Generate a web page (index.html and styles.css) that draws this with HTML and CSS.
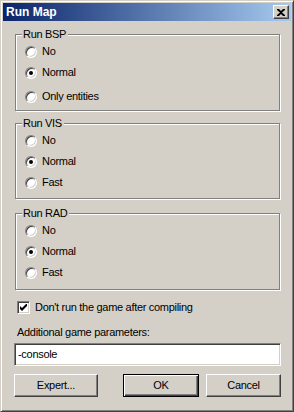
FILE: index.html
```html
<!DOCTYPE html>
<html lang="en">
<head>
    <meta charset="UTF-8">
    <title>Run Map</title>
    <link rel="stylesheet" href="styles.css">
</head>
<body>

    <div class="window">
        <div class="titlebar">
            <span class="title">Run Map</span>
            <span class="close-btn">
                <svg width="8" height="7" viewBox="0 0 8 7">
                    <path d="M0 0h2l2 2 2-2h2v1L5 3.5 8 6v1H6L4 5 2 7H0V6l3-2.5L0 1z" fill="#000"/>
                </svg>
            </span>
        </div>

        <div class="client">
            <div class="group group-bsp">
                <span class="caption">Run BSP</span>
                <div class="option"><span class="radio"></span>No</div>
                <div class="option"><span class="radio checked"></span>Normal</div>
                <div class="option option-spaced"><span class="radio"></span>Only entities</div>
            </div>

            <div class="group group-vis">
                <span class="caption">Run VIS</span>
                <div class="option"><span class="radio"></span>No</div>
                <div class="option"><span class="radio checked"></span>Normal</div>
                <div class="option"><span class="radio"></span>Fast</div>
            </div>

            <div class="group group-rad">
                <span class="caption">Run RAD</span>
                <div class="option"><span class="radio"></span>No</div>
                <div class="option"><span class="radio checked"></span>Normal</div>
                <div class="option"><span class="radio"></span>Fast</div>
            </div>

            <div class="check-row">
                <span class="checkbox">
                    <svg width="7" height="7" viewBox="0 0 7 7">
                        <path d="M0 2v3l2 2 5-5V-1L2 4z" fill="#000"/>
                    </svg>
                </span>
                Don't run the game after compiling
            </div>

            <div class="param-label">Additional game parameters:</div>
            <div class="textbox">-console</div>

            <div class="buttons">
                <span class="btn btn-expert">Expert...</span>
                <span class="btn btn-ok">OK</span>
                <span class="btn btn-cancel">Cancel</span>
            </div>
        </div>
    </div>

</body>
</html>
```

FILE: styles.css
```css
body {
    margin: 0;
    padding: 0;
    background: #d4d0c8;
    font-family: 'Liberation Sans', Arial, sans-serif;
    font-size: 11px;
    line-height: 13px;
    letter-spacing: -0.3px;
    color: #000;
}

.window {
    width: 294px;
    height: 412px;
    box-sizing: border-box;
    padding: 2px;
    background: #d4d0c8;
    border: 1px solid;
    border-color: #d4d0c8 #404040 #404040 #d4d0c8;
    box-shadow: inset 1px 1px 0 #fff, inset -1px -1px 0 #808080;
    display: flex;
    flex-direction: column;
}

/* barra de titulo */
.titlebar {
    height: 18px;
    display: flex;
    align-items: center;
    justify-content: space-between;
    padding: 0 2px 0 2px;
    background: linear-gradient(to right, #0a246a, #a6caf0);
}

.title {
    color: #fff;
    font-weight: bold;
    font-size: 12px;
    letter-spacing: 0;
    padding-left: 1px;
}

.close-btn {
    width: 16px;
    height: 14px;
    box-sizing: border-box;
    display: flex;
    align-items: center;
    justify-content: center;
    background: #d4d0c8;
    border: 1px solid;
    border-color: #fff #404040 #404040 #fff;
    box-shadow: inset -1px -1px 0 #808080;
}

.client {
    padding: 0 0 0 12px;
    display: flex;
    flex-direction: column;
}

/* cuadros de grupo */
.group {
    position: relative;
    width: 265px;
    box-sizing: border-box;
    border: 1px solid #808080;
    box-shadow: 1px 1px 0 #fff, inset 1px 1px 0 #fff;
    padding: 6px 0 0 9px;
}

.group-bsp {
    margin-top: 13px;
    height: 77px;
}

.group-vis {
    margin-top: 12px;
    height: 76px;
}

.group-rad {
    margin-top: 14px;
    height: 77px;
}

.caption {
    position: absolute;
    top: -7px;
    left: 6px;
    padding: 0 2px 0 1px;
    background: #d4d0c8;
}

.option {
    height: 21px;
    display: flex;
    align-items: center;
}

.option-spaced {
    margin-top: 3px;
}

.radio {
    position: relative;
    width: 12px;
    height: 12px;
    box-sizing: border-box;
    margin-right: 5px;
    border-radius: 50%;
    background: #fff;
    border: 1px solid;
    border-color: #808080 #fff #fff #808080;
    box-shadow: inset 1px 1px 0 #404040, inset -1px -1px 0 #d4d0c8;
}

.radio.checked::after {
    content: "";
    position: absolute;
    left: 3px;
    top: 3px;
    width: 4px;
    height: 4px;
    border-radius: 50%;
    background: #000;
}

.check-row {
    margin-top: 11px;
    display: flex;
    align-items: center;
    height: 13px;
    padding-left: 2px;
}

.checkbox {
    width: 13px;
    height: 13px;
    box-sizing: border-box;
    margin-right: 5px;
    display: flex;
    align-items: center;
    justify-content: center;
    background: #fff;
    border: 1px solid;
    border-color: #808080 #fff #fff #808080;
    box-shadow: inset 1px 1px 0 #404040, inset -1px -1px 0 #d4d0c8;
}

.param-label {
    margin-top: 12px;
    padding-left: 2px;
}

.textbox {
    margin-top: 4px;
    margin-left: -1px;
    width: 267px;
    height: 23px;
    box-sizing: border-box;
    padding: 0 3px;
    display: flex;
    align-items: center;
    background: #fff;
    border: 1px solid;
    border-color: #808080 #fff #fff #808080;
    box-shadow: inset 1px 1px 0 #404040, inset -1px -1px 0 #d4d0c8;
}

.buttons {
    margin-top: 8px;
    margin-left: -1px;
    display: flex;
}

.btn {
    height: 23px;
    box-sizing: border-box;
    display: flex;
    align-items: center;
    justify-content: center;
    background: #d4d0c8;
    border: 1px solid;
    border-color: #fff #404040 #404040 #fff;
    box-shadow: inset -1px -1px 0 #808080;
}

.btn-expert {
    width: 84px;
}

.btn-ok {
    width: 76px;
    margin-left: 25px;
    border-color: #000;
    box-shadow: inset 1px 1px 0 #fff, inset -1px -1px 0 #404040, inset -2px -2px 0 #808080;
}

.btn-cancel {
    width: 75px;
    margin-left: 7px;
}
```
